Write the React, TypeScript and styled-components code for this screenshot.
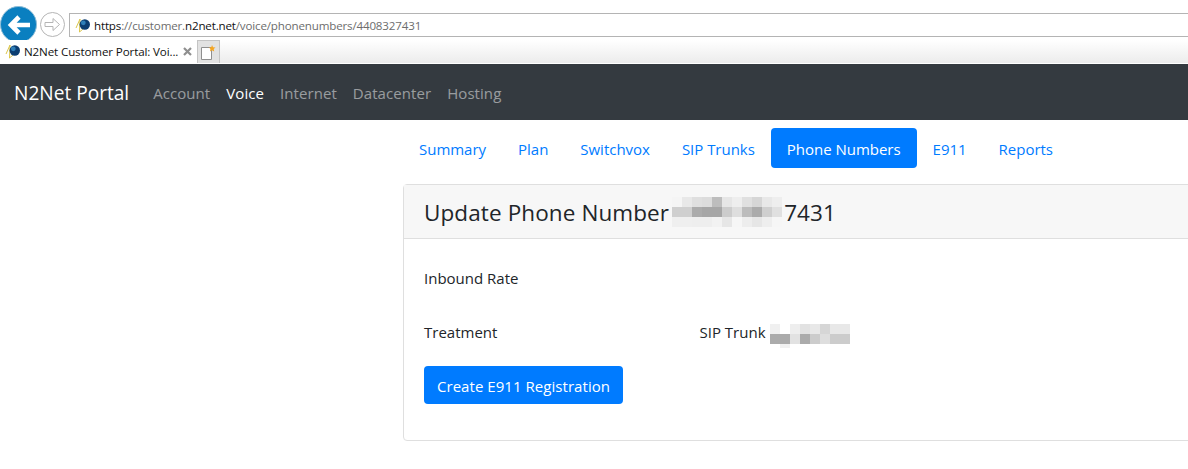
import React from "react";
import styled, { createGlobalStyle } from "styled-components";

const Global = createGlobalStyle`
  html, body { margin: 0; padding: 0; background: #fff; overflow: hidden; }
  body { font-family: "Open Sans", "Noto Sans", "Liberation Sans", sans-serif; color: #212529; }
  * { box-sizing: border-box; }
`;

const Page = styled.div`width: 1188px; height: 469px; overflow: hidden; display: flex; flex-direction: column;`;
const Chrome = styled.header`height: 64px; display: flex; flex-direction: column; background: #fff;`;
const AddressRow = styled.div`height: 40px; display: flex; align-items: flex-start; flex: none; overflow: hidden; padding-top: 6px;`;
const BackButton = styled.div`width: 37px; height: 37px; flex: none; border-radius: 50%; background: #0a7fc0; border: 1px solid #8dbcd6; display: flex; align-items: center; justify-content: center;`;
const ForwardButton = styled.div`width: 25px; height: 25px; flex: none; margin: 6px 0 0 3px; border-radius: 50%; border: 1px solid #b5b5b5; display: flex; align-items: center; justify-content: center;`;
const AddressBar = styled.div`flex: 1; height: 24px; margin: 7px 0 0 4px; border: 1px solid #b4b4b4; border-right: none; display: flex; align-items: center; padding-left: 5px; font-size: 11.6px; white-space: nowrap;`;
const UrlFaint = styled.span`color: #6d6d6d;`;
const UrlStrong = styled.span`color: #111;`;
const Url = styled.span`margin-left: 3px; letter-spacing: -0.17px; padding-top: 1px;`;
const TabRow = styled.div`height: 24px; display: flex; align-items: stretch; background: linear-gradient(#fff, #ececec); border-bottom: 1px solid #fff;`;
const BrowserTab = styled.div`width: 197px; background: #fff; display: flex; align-items: center; padding: 0 0 0 5px; font-size: 11.6px; color: #111; white-space: nowrap;`;
const TabTitle = styled.span`margin-left: 3px; flex: 1; letter-spacing: -0.13px;`;
const TabClose = styled.span`margin-right: 5px; display: flex;`;
const NewTab = styled.div`width: 23px; background: #e2e2e2; border: 1px solid #c4c4c4; border-bottom: none; display: flex; align-items: center; justify-content: center;`;

const Navbar = styled.nav`height: 56px; flex: none; background: #343a40; display: flex; align-items: center; padding: 2px 0 0 14px;`;
const Brand = styled.span`font-size: 19.1px; color: #fff; margin-right: 24px;`;
const NavLink = styled.span<{ $active?: boolean }>`font-size: 15px; letter-spacing: 0.07px; margin-right: 16px; color: ${p => p.$active ? "#fff" : "rgba(255,255,255,.5)"};`;

const Main = styled.main`padding: 8px 0 0 403px; flex: 1;`;
const Tabs = styled.div`display: flex; height: 40px; padding-left: 0;`;
const Pill = styled.span<{ $active?: boolean }>`height: 40px; padding: 2px 16px 0; display: flex; align-items: center; font-size: 15px; letter-spacing: -0.02px; border-radius: 4px; color: ${p => p.$active ? "#fff" : "#007bff"}; background: ${p => p.$active ? "#007bff" : "transparent"};`;
const Card = styled.section`margin-top: 16px; width: 800px; height: 257px; border: 1px solid #dfdfdf; border-radius: 4px; display: flex; flex-direction: column;`;
const CardHeader = styled.div`height: 54px; flex: none; background: #f7f7f7; border-bottom: 1px solid #dfdfdf; display: flex; align-items: center; padding: 1px 0 0 20px; font-size: 22.5px; letter-spacing: 0.1px; color: #212529;`;
const CardBody = styled.div`padding: 0 20px; flex: 1; display: flex; flex-direction: column;`;
const FormRow = styled.div<{ $top: number }>`display: flex; align-items: center; font-size: 15px; letter-spacing: 0; height: 24px; margin-top: ${p => p.$top}px;`;
const Label = styled.span`width: 275.5px; flex: none;`;
const Value = styled.span`display: flex; align-items: center;`;
const MosaicSvg = styled.svg`display: block; flex: none;`;
const HeadMosaic = styled(MosaicSvg)`margin: -1px 2px 0 3px;`;
const TrunkMosaic = styled(MosaicSvg)`margin-left: 4.5px; margin-top: 8px;`;
const Primary = styled.button`margin-top: 22px; align-self: flex-start; width: 199px; height: 38px; border: 0; padding: 1px 0 0; border-radius: 4px; background: #007bff; color: #fff; font: inherit; font-size: 15px; letter-spacing: 0.05px;`;

const Mosaic = ({ rows, w, h, as: C }: { rows: string[][]; w: number; h: number; as: typeof MosaicSvg }) => (
  <C width={w} height={h} viewBox={`0 0 ${w} ${h}`} aria-hidden="true">
    {rows.map((row, y) => row.map((c, x) => <rect key={`${x}-${y}`} x={x * 10} y={y * 10} width={10} height={10} fill={c} />))}
  </C>
);

const head = [
  ["#f5f5f5","#e8e8e8","#dfdfdf","#dcdcdc","#bdbdbd","#e6e6e6","#eeeeee","#e0e0e0","#d6d6d6","#e8e8e8","#eeeeee"],
  ["#cfcfcf","#cfcfcf","#ababab","#a6a6a6","#a6a6a6","#cccccc","#dedede","#bcbcbc","#ababab","#cfcfcf","#e0e0e0"],
  ["#efefef","#efefef","#eeeeee","#eeeeee","#f2f2f2","#e6e6e6","#f6f6f6","#ededed","#e6e6e6","#eeeeee","#f6f6f6"],
];
const trunk = [
  ["#f0f0f0","#ffffff","#eeeeee","#e2e2e2","#e8e8e8","#d6d6d6","#e8e8e8","#e8e8e8"],
  ["#ababab","#ababab","#e2e2e2","#ababab","#cccccc","#dedede","#cccccc","#cccccc"],
  ["#ffffff","#f1f1f1","#ffffff","#ffffff","#ffffff","#ffffff","#ffffff","#ffffff"],
];

const Favicon = () => (
  <svg width="16" height="15" viewBox="0 0 16 15" aria-hidden="true">
    <path d="M5 1 L1 10 M5 1 L4.500 14 L8 11" stroke="#dcc64a" strokeWidth="1" fill="none" />
    <circle cx="9.800" cy="6.500" r="5.200" fill="#0c3d70" />
    <circle cx="8.300" cy="4.800" r="2.400" fill="#2f7fb8" />
  </svg>
);

export default function App() {
  return (
    <Page>
      <Global />
      <Chrome>
        <AddressRow>
          <BackButton>
            <svg width="24" height="20" viewBox="0 0 24 20" aria-hidden="true">
              <path d="M23 10H5M12 2l-8 8 8 8" fill="none" stroke="#fff" strokeWidth="4.600" />
            </svg>
          </BackButton>
          <ForwardButton>
            <svg width="17" height="15" viewBox="0 0 17 15" aria-hidden="true">
              <path d="M1 5.500h8V1.500l6.500 6-6.500 6v-4H1z" fill="none" stroke="#b5b5b5" strokeWidth="1" />
            </svg>
          </ForwardButton>
          <AddressBar>
            <Favicon />
            <Url>
              <UrlStrong>https</UrlStrong><UrlFaint>://customer.</UrlFaint><UrlStrong>n2net.net</UrlStrong><UrlFaint>/voice/phonenumbers/4408327431</UrlFaint>
            </Url>
          </AddressBar>
        </AddressRow>
        <TabRow>
          <BrowserTab>
            <Favicon />
            <TabTitle>N2Net Customer Portal: Voi...</TabTitle>
            <TabClose>
              <svg width="9" height="9" viewBox="0 0 9 9" aria-hidden="true"><path d="M1 1l7 7M8 1L1 8" stroke="#8f8f8f" strokeWidth="2.200" /></svg>
            </TabClose>
          </BrowserTab>
          <NewTab>
            <svg width="17" height="17" viewBox="0 0 17 17" aria-hidden="true">
              <path d="M1.500 3.500h10v12h-10z" fill="#fff" stroke="#8f8f8f" />
              <path d="M12 1l1 2.200 2.500.3-1.800 1.600.5 2.400-2.200-1.200-2 1.200.4-2.400L9 3.500l2.300-.3z" fill="#f5a623" />
            </svg>
          </NewTab>
        </TabRow>
      </Chrome>
      <Navbar>
        <Brand>N2Net Portal</Brand>
        <NavLink>Account</NavLink>
        <NavLink $active>Voice</NavLink>
        <NavLink>Internet</NavLink>
        <NavLink>Datacenter</NavLink>
        <NavLink>Hosting</NavLink>
      </Navbar>
      <Main>
        <Tabs>
          <Pill>Summary</Pill>
          <Pill>Plan</Pill>
          <Pill>Switchvox</Pill>
          <Pill>SIP Trunks</Pill>
          <Pill $active>Phone Numbers</Pill>
          <Pill>E911</Pill>
          <Pill>Reports</Pill>
        </Tabs>
        <Card>
          <CardHeader>
            Update Phone Number
            <Mosaic as={HeadMosaic} rows={head} w={110} h={30} />
            7431
          </CardHeader>
          <CardBody>
            <FormRow $top={27}><Label>Inbound Rate</Label></FormRow>
            <FormRow $top={30}>
              <Label>Treatment</Label>
              <Value>SIP Trunk<Mosaic as={TrunkMosaic} rows={trunk} w={80} h={24} /></Value>
            </FormRow>
            <Primary>Create E911 Registration</Primary>
          </CardBody>
        </Card>
      </Main>
    </Page>
  );
}
